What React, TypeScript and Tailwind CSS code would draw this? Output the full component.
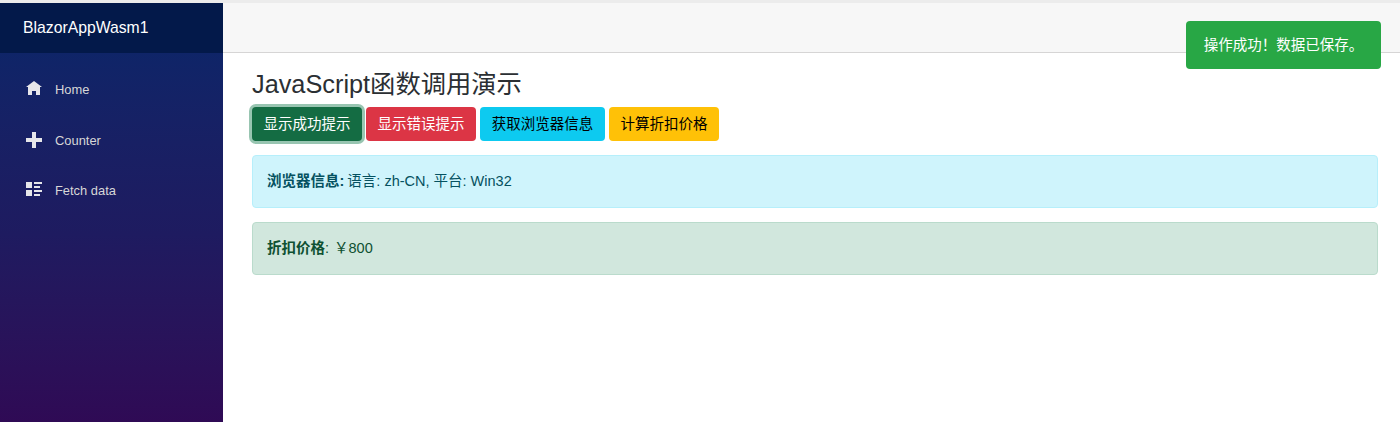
const font = { fontFamily: '"Liberation Sans", "Noto Sans CJK SC", sans-serif' };

function NavItem({ label, d }: { label: string; d: string }) {
  return (
    <a className="flex h-[50.5px] items-center pl-[26px] text-[12.9px] text-[#d7d7d7]">
      <svg viewBox="0 0 8 8" className="mb-px mr-[13px] h-4 w-4 fill-[#e6e6ea]">
        <path d={d} />
      </svg>
      {label}
    </a>
  );
}

export default function App() {
  return (
    <div className="relative flex h-[422px] flex-col overflow-hidden bg-white" style={font}>
      <div className="h-[3px] bg-[#ececec]" />
      <div className="flex flex-1">
        {/* Sidebar */}
        <div className="w-[223px] bg-gradient-to-b from-[#07276a] via-[#1e1b60] via-55% to-[#2f0a55]">
          <div className="flex h-[50px] items-center bg-[#03194a] pl-[23px] text-[15.75px] text-white">
            BlazorAppWasm1
          </div>
          <nav className="pt-[11.6px]">
            <NavItem label="Home" d="M4 0l-4 3h1v4h2v-2h2v2h2v-4.03l1 .03-4-3z" />
            <NavItem label="Counter" d="M3 0v3h-3v2h3v3h2v-3h3v-2h-3v-3h-2z" />
            <NavItem
              label="Fetch data"
              d="M0 0v3h3v-3h-3zm4 0v1h4v-1h-4zm0 2v1h3v-1h-3zm-4 2v3h3v-3h-3zm4 0v1h4v-1h-4zm0 2v1h3v-1h-3z"
            />
          </nav>
        </div>

        {/* Main */}
        <div className="flex-1">
          <div className="h-[50px] border-b border-[#d6d5d5] bg-[#f7f7f7]" />
          <div className="pl-[29px] pr-[22px] pt-[14px]">
            <h1 className="h-[40px] text-[25.3px] leading-[34px] text-[#2b2f33]">JavaScript函数调用演示</h1>
            <div className="flex gap-1">
              <button className="h-[34px] w-[110px] rounded-[4px] bg-[#146c43] pt-[2px] text-[14.5px] text-white shadow-[0_0_0_3px_#98c5b1]">
                显示成功提示
              </button>
              <button className="h-[34px] w-[110px] rounded-[4px] bg-[#dc3545] pt-[2px] text-[14.5px] text-white">
                显示错误提示
              </button>
              <button className="h-[34px] w-[125px] rounded-[4px] bg-[#0dcaf0] pt-[2px] text-[14.5px] text-black">
                获取浏览器信息
              </button>
              <button className="h-[34px] w-[110px] rounded-[4px] bg-[#ffc107] pt-[2px] text-[14.5px] text-black">
                计算折扣价格
              </button>
            </div>
            <div className="mt-[14px] flex h-[53px] items-center rounded-[4px] border border-[#b6effb] bg-[#cff4fc] px-[14px] pt-px text-[14.5px] text-[#055160]">
              <strong>浏览器信息:</strong>
              <span className="ml-[3px]">语言: zh-CN, 平台: Win32</span>
            </div>
            <div className="mt-[14px] flex h-[53px] items-center rounded-[4px] border border-[#badbcc] bg-[#d1e7dd] px-[14px] text-[14.5px] text-[#0f5132]">
              <strong>折扣价格</strong>:
              <span className="ml-[5px]">￥800</span>
            </div>
          </div>
        </div>
      </div>

      {/* Toast */}
      <div className="absolute right-[19px] top-[21px] flex h-[48px] w-[195px] items-center justify-center rounded-[4px] bg-[#28a745] pt-[2px] text-[14.5px] text-white">
        操作成功！数据已保存。
      </div>
    </div>
  );
}
